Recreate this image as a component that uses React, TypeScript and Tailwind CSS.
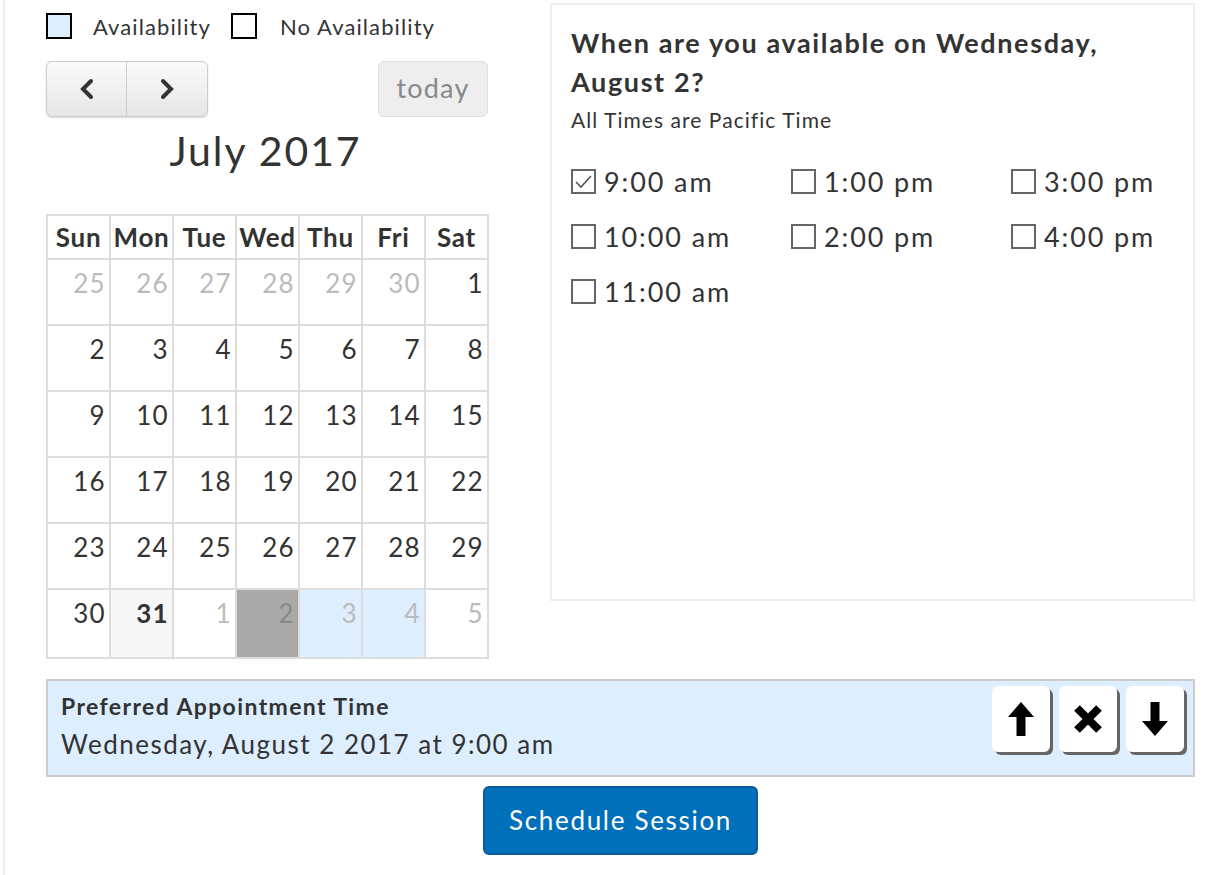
import React, { useState } from 'react';

const weeks: { d: number; muted?: boolean; cls?: string; bold?: boolean }[][] = [
  [{ d: 25, muted: true }, { d: 26, muted: true }, { d: 27, muted: true }, { d: 28, muted: true }, { d: 29, muted: true }, { d: 30, muted: true }, { d: 1 }],
  [{ d: 2 }, { d: 3 }, { d: 4 }, { d: 5 }, { d: 6 }, { d: 7 }, { d: 8 }],
  [{ d: 9 }, { d: 10 }, { d: 11 }, { d: 12 }, { d: 13 }, { d: 14 }, { d: 15 }],
  [{ d: 16 }, { d: 17 }, { d: 18 }, { d: 19 }, { d: 20 }, { d: 21 }, { d: 22 }],
  [{ d: 23 }, { d: 24 }, { d: 25 }, { d: 26 }, { d: 27 }, { d: 28 }, { d: 29 }],
  [
    { d: 30 },
    { d: 31, bold: true, cls: 'bg-[#f7f7f7]' },
    { d: 1, muted: true },
    { d: 2, muted: true, cls: 'bg-[#a9a9a9] !text-[#888]' },
    { d: 3, muted: true, cls: 'bg-[#ddeeff]' },
    { d: 4, muted: true, cls: 'bg-[#ddeeff]' },
    { d: 5, muted: true },
  ],
];

const times = ['9:00 am', '1:00 pm', '3:00 pm', '10:00 am', '2:00 pm', '4:00 pm', '11:00 am'];

const App: React.FC = () => {
  const [checked, setChecked] = useState<string[]>(['9:00 am']);

  const toggle = (t: string) => {
    setChecked(checked.includes(t) ? checked.filter((c) => c !== t) : [...checked, t]);
  };

  return (
    <div className="min-h-[875px] bg-white text-[#333] font-['Lato',sans-serif]">
      <div className="ml-[3px] min-h-[875px] border-l-2 border-[#eeeeee] pl-[41px] pr-[15px] pt-[3px]">
        <div className="flex gap-[62px]">
          {/* Calendar */}
          <div className="w-[442px] shrink-0">
            <div className="mt-[10px] flex items-center h-[26px] text-[22px] tracking-[0.05em]">
              <span className="w-[26px] h-[26px] border-2 border-black bg-[#ddeeff]" />
              <span className="ml-[21px]">Availability</span>
              <span className="ml-[20px] w-[26px] h-[26px] border-2 border-black bg-white" />
              <span className="ml-[23px]">No Availability</span>
            </div>

            <div className="mt-[22px] flex justify-between">
              <div className="flex h-[56px] rounded-md border border-[#ccc] shadow-[0_1px_2px_rgba(0,0,0,0.15)] bg-gradient-to-b from-[#fafafa] to-[#e6e6e6] overflow-hidden">
                <button className="w-[80px] flex items-center justify-center border-r border-[#ccc]">
                  <svg width="20" height="22" viewBox="0 0 20 22" fill="none" stroke="#333" strokeWidth="4" strokeLinecap="round">
                    <path d="M14 3 L6 11 L14 19" />
                  </svg>
                </button>
                <button className="w-[80px] flex items-center justify-center">
                  <svg width="20" height="22" viewBox="0 0 20 22" fill="none" stroke="#333" strokeWidth="4" strokeLinecap="round">
                    <path d="M6 3 L14 11 L6 19" />
                  </svg>
                </button>
              </div>
              <button className="w-[110px] h-[56px] rounded-md border border-[#ddd] bg-[#eeeeee] text-[27px] tracking-[0.045em] text-[#888] pb-[2px]">today</button>
            </div>

            <h2 className="mt-[8px] text-center text-[41px] leading-[52px] tracking-[0.046em] text-[#333] pr-[3px]">July 2017</h2>

            <table className="mt-[37px] w-[443px] border-collapse table-fixed">
              <thead>
                <tr className="h-[44px]">
                  {['Sun', 'Mon', 'Tue', 'Wed', 'Thu', 'Fri', 'Sat'].map((d) => (
                    <th key={d} className="border-2 border-[#dddddd] text-[26px] tracking-[0.03em] font-bold p-0 leading-none">{d}</th>
                  ))}
                </tr>
              </thead>
              <tbody>
                {weeks.map((w, i) => (
                  <tr key={i} className={i === 5 ? 'h-[69px]' : 'h-[66px]'}>
                    {w.map((c, j) => (
                      <td
                        key={j}
                        className={`border-2 border-[#dddddd] align-top text-right pr-[3px] pt-[7px] text-[26px] tracking-[0.05em] leading-[32px] ${c.muted ? 'text-[#bbbbbb]' : 'text-[#333]'} ${c.bold ? 'font-bold' : ''} ${c.cls ?? ''}`}
                      >
                        {c.d}
                      </td>
                    ))}
                  </tr>
                ))}
              </tbody>
            </table>
          </div>

          {/* Time selection */}
          <div className="flex-1 h-[598px] border-2 border-[#eeeeee] px-[19px] pt-[18px]">
            <h3 className="text-[27px] font-bold leading-[39px] tracking-[0.06em] text-[#333] w-[560px]">
              When are you available on Wednesday, August 2?
            </h3>
            <p className="mt-[6px] text-[21px] leading-[26px] tracking-[0.05em]">All Times are Pacific Time</p>
            <div className="mt-[33px] grid grid-cols-[220px_220px_1fr] gap-y-[24px]">
              {times.map((t) => (
                <label key={t} className="flex items-center h-[31px] cursor-pointer" onClick={() => toggle(t)}>
                  <span className="w-[25px] h-[25px] border-2 border-[#666] bg-white flex items-center justify-center">
                    {checked.includes(t) && (
                      <svg width="17" height="14" viewBox="0 0 17 14" fill="none" stroke="#555" strokeWidth="1.6">
                        <path d="M1 7 L6 12 L16 1" />
                      </svg>
                    )}
                  </span>
                  <span className="ml-[8px] text-[27px] tracking-[0.07em] leading-none">{t}</span>
                </label>
              ))}
            </div>
          </div>
        </div>

        {/* Preferred time */}
        <div className="mt-[20px] h-[98px] border-2 border-[#cccccc] bg-[#ddeeff] flex justify-between pl-[13px] pr-[9px]">
          <div className="pt-[11px]">
            <div className="text-[23px] font-bold leading-[28px] tracking-[0.06em] text-[#333]">Preferred Appointment Time</div>
            <div className="mt-[8px] text-[26px] leading-[32px] tracking-[0.057em] text-[#333]">Wednesday, August 2 2017 at 9:00 am</div>
          </div>
          <div className="flex gap-[9px] pt-[5px]">
            <button className="w-[58px] h-[66px] rounded-md bg-white shadow-[3px_3px_0_#666] flex items-center justify-center">
              <svg width="28" height="36" viewBox="0 0 28 36">
                <path d="M14 1 L27 16 L18.5 16 L18.5 35 L9.5 35 L9.5 16 L1 16 Z" fill="#000" />
              </svg>
            </button>
            <button className="w-[58px] h-[66px] rounded-md bg-white shadow-[3px_3px_0_#666] flex items-center justify-center">
              <svg width="32" height="32" viewBox="0 0 32 32" stroke="#000" strokeWidth="8">
                <path d="M5 5 L27 27 M27 5 L5 27" />
              </svg>
            </button>
            <button className="w-[58px] h-[66px] rounded-md bg-white shadow-[3px_3px_0_#666] flex items-center justify-center">
              <svg width="28" height="36" viewBox="0 0 28 36">
                <path d="M9.5 1 L18.5 1 L18.5 20 L27 20 L14 35 L1 20 L9.5 20 Z" fill="#000" />
              </svg>
            </button>
          </div>
        </div>

        <div className="mt-[9px] flex justify-center">
          <button className="w-[275px] h-[69px] rounded-md border-2 border-[#0a5a9c] bg-[#0070ba] text-white text-[26px] tracking-[0.065em]">
            Schedule Session
          </button>
        </div>
      </div>
    </div>
  );
};

export default App;
